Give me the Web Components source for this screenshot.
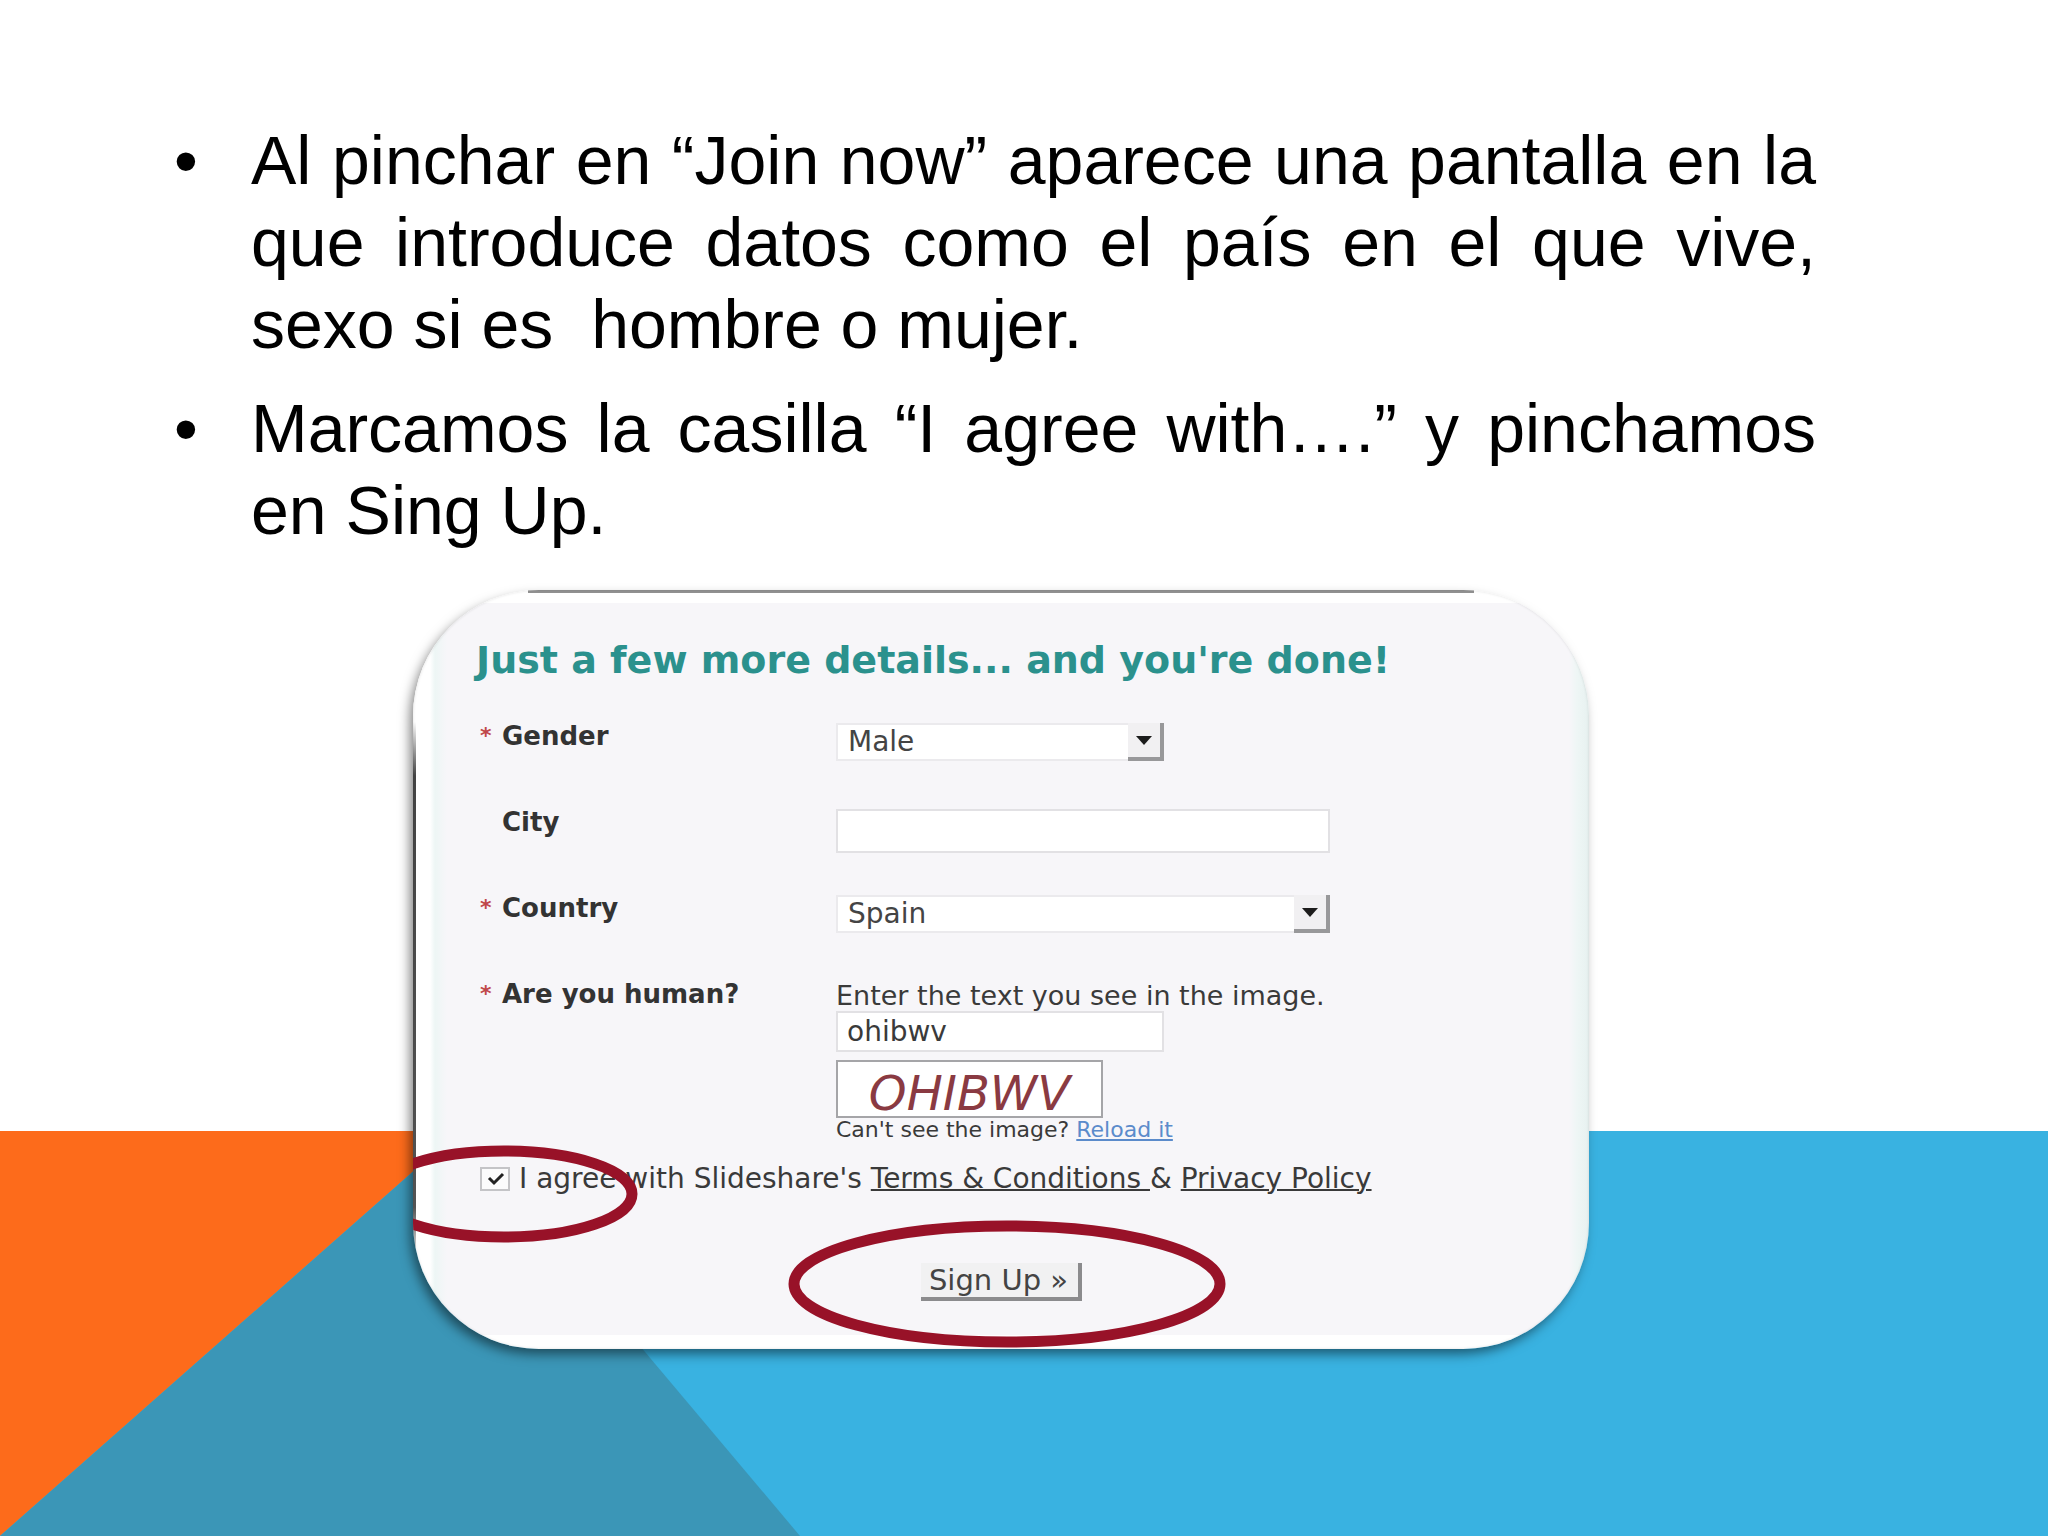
<!DOCTYPE html>
<html lang="es">
<head>
<meta charset="utf-8">
<meta name="viewport" content="width=device-width, initial-scale=1">
<title>Join now</title>
<style>
  html, body { margin: 0; background: #fff; }
  body { font-family: "Liberation Sans", Arial, sans-serif; color: #000; }
</style>
</head>
<body>
<slide-page>
  <slide-backdrop slot="backdrop"></slide-backdrop>
  <bullet-list slot="text">
    <bullet-item>Al pinchar en “Join now” aparece una pantalla en la que introduce datos como el país en el que vive, sexo si es&nbsp; hombre o mujer.</bullet-item>
    <bullet-item>Marcamos la casilla “I agree with….” y pinchamos en Sing Up.</bullet-item>
  </bullet-list>
  <signup-card slot="figure"></signup-card>
</slide-page>

<script>
const define = (name, html) => {
  const template = document.createElement('template');
  template.innerHTML = html;
  customElements.define(name, class extends HTMLElement {
    constructor() {
      super();
      this.attachShadow({ mode: 'open' }).append(template.content.cloneNode(true));
    }
  });
};

define('slide-page', `
  <style>
    :host { display: grid; min-height: 100vh; overflow: hidden; }
    .back, main { grid-area: 1 / 1; min-width: 0; }
    .back { display: flex; flex-direction: column; justify-content: flex-end; }
    main { z-index: 1; display: flex; flex-direction: column; gap: 39px; padding-top: 119px; }
    .text { display: grid; grid-template-columns: minmax(0, 174fr) minmax(0, 1642fr) minmax(0, 232fr); }
    .figure { display: grid; grid-template-columns: minmax(0, 413fr) minmax(0, 1176fr) minmax(0, 459fr); }
    ::slotted(*) { grid-column: 2; }
  </style>
  <div class="back"><slot name="backdrop"></slot></div>
  <main>
    <div class="text"><slot name="text"></slot></div>
    <div class="figure"><slot name="figure"></slot></div>
  </main>`);

define('slide-backdrop', `
  <style>
    :host { display: block; height: 405px; }
    svg { display: block; width: 100%; height: 100%; }
  </style>
  <svg viewBox="0 0 2048 405" preserveAspectRatio="none" aria-hidden="true">
    <rect width="2048" height="405" fill="#39b2e1"/>
    <path d="M0 0H459L0 405Z" fill="#fd6b1b"/>
    <path d="M0 405L459 0L800 405Z" fill="#3b96b7"/>
  </svg>`);

define('bullet-list', `
  <style>:host { display: flex; flex-direction: column; gap: 22px; }</style>
  <slot></slot>`);

define('bullet-item', `
  <style>
    :host { display: grid; grid-template-columns: 77px minmax(0, 1fr); font-size: 68px; line-height: 82px; }
    p { margin: 0; text-align: justify; }
  </style>
  <span>•</span><p><slot></slot></p>`);

define('form-row', `
  <style>
    :host { display: grid; grid-template-columns: 22px 334px minmax(0, 1fr); align-items: start; min-height: 86px; }
    .mark { font-weight: bold; font-size: 22px; line-height: 26px; color: #c0484a; }
    :host(:not([required])) .mark { visibility: hidden; }
    .field { display: flex; flex-direction: column; align-items: flex-start; }
  </style>
  <span class="mark">*</span>
  <slot name="label"></slot>
  <div class="field"><slot></slot></div>`);

define('drop-down', `
  <style>
    :host { display: grid; grid-template-columns: minmax(0, 1fr) 36px; height: 38px; box-sizing: border-box; }
    ::slotted(select) {
      grid-area: 1 / 1 / 2 / 3; appearance: none; width: 100%; height: 38px; margin: 0; padding: 0 40px 0 10px;
      border: 2px solid #ebeaed; border-radius: 0; background: #fff; color: #444;
      font: 28px/34px "DejaVu Sans", sans-serif;
    }
    .arrow {
      grid-area: 1 / 2; z-index: 1; pointer-events: none; box-sizing: border-box;
      display: flex; align-items: center; justify-content: center;
      background: #f1f0f2; border: solid #98989a; border-width: 0 4px 4px 0;
    }
    svg { width: 16px; height: 9px; }
  </style>
  <slot></slot>
  <span class="arrow"><svg viewBox="0 0 18 10" aria-hidden="true"><path d="M0 0H18L9 10Z" fill="#1c1c1c"/></svg></span>`);

define('signup-card', `
  <style>
    :host {
      display: block; position: relative; box-sizing: border-box; overflow: hidden;
      padding: 48px 66px 48px 67px; border-radius: 126px;
      font-family: "DejaVu Sans", Verdana, sans-serif; color: #3a3a3a;
      background:
        linear-gradient(#929292, #929292) 50% 0 / calc(100% - 230px) 3px no-repeat,
        linear-gradient(transparent, #444 10%, #555 90%, transparent) 0 60% / 3px calc(100% - 220px) no-repeat,
        linear-gradient(#fff, #fff) 0 0 / 100% 13px no-repeat,
        linear-gradient(#fff, #fff) 0 100% / 100% 14px no-repeat,
        linear-gradient(90deg, #fff 17px, #edf6f5 22px, #f7f6f9 34px, #f7f6f9 calc(100% - 20px), #eef6f5 calc(100% - 12px), #e7f1f0) 0 0 / 100% 100%;
      box-shadow: inset 0 0 3px rgba(0, 0, 0, .12), -4px 6px 12px -1px rgba(0, 0, 0, .5);
    }
    h1 { margin: 0 0 41px -4px; font-size: 38px; line-height: 44px; color: #2b918d; white-space: nowrap; }
    label.name { font-weight: bold; font-size: 26px; line-height: 26px; color: #333; }
    label.hint { font-size: 27px; line-height: 30px; }
    input.box {
      box-sizing: border-box; margin: 0; padding: 0 9px; border: 2px solid #e2e1e4; border-radius: 0;
      background: #fff; color: #3a3a3a; font: 28px/32px "DejaVu Sans", sans-serif; height: 44px;
    }
    #answer { height: 41px; }
    .wide { width: 494px; max-width: 100%; }
    .mid { width: 328px; max-width: 100%; }
    .captcha {
      box-sizing: border-box; width: 267px; height: 58px; margin-top: 8px; border: 2px solid #a5a5a8;
      background: #fff; text-align: center; font-size: 48px; line-height: 62px; color: #8a3a42; font-style: italic;
    }
    .reload { font-size: 22px; line-height: 24px; }
    .reload a { color: #5b8bcb; }
    .agree { display: flex; align-items: center; gap: 9px; margin-top: 22px; font-size: 28px; line-height: 30px; white-space: pre; }
    .agree a { color: inherit; text-decoration-thickness: 2px; }
    .agree input {
      appearance: none; flex: none; box-sizing: border-box; width: 30px; height: 24px; margin: 0; border: 2px solid #c4c4c7;
      background: #fbfbfc url("data:image/svg+xml,%3Csvg xmlns='http://www.w3.org/2000/svg' viewBox='0 0 26 20'%3E%3Cpath d='M7 9l5 5 9-9' fill='none' stroke='%23222' stroke-width='3'/%3E%3C/svg%3E") center / 100% 100% no-repeat;
    }
    .actions { display: flex; justify-content: center; margin-top: 69px; }
    button {
      box-sizing: border-box; height: 38px; margin: 0; padding: 0 10px 0 8px; border: solid #8b8b8d; border-width: 0 4px 4px 0;
      background: #f1f1f2; color: #444; font: 29px/34px "DejaVu Sans", sans-serif;
    }
    .rings { position: absolute; inset: 0; width: 100%; height: 100%; pointer-events: none; }
  </style>
  <h1>Just a few more details... and you're done!</h1>
  <form-row required>
    <label class="name" slot="label" for="gender">Gender</label>
    <drop-down class="mid"><select id="gender"><option>Male</option><option>Female</option></select></drop-down>
  </form-row>
  <form-row>
    <label class="name" slot="label" for="city">City</label>
    <input class="box wide" id="city" type="text">
  </form-row>
  <form-row required>
    <label class="name" slot="label" for="country">Country</label>
    <drop-down class="wide"><select id="country"><option>Spain</option></select></drop-down>
  </form-row>
  <form-row required>
    <label class="name" slot="label" for="answer">Are you human?</label>
    <label class="hint" for="answer">Enter the text you see in the image.</label>
    <input class="box mid" id="answer" type="text" value="ohibwv">
    <div class="captcha">OHIBWV</div>
    <div class="reload">Can't see the image? <a href="#reload">Reload it</a></div>
  </form-row>
  <div class="agree"><input id="agree" type="checkbox" checked><label for="agree">I agree with Slideshare's <a href="#terms">Terms &amp; Conditions </a>&amp; <a href="#privacy">Privacy Policy</a></label></div>
  <div class="actions"><button type="button">Sign Up »</button></div>
  <svg class="rings" viewBox="0 0 1176 759" aria-hidden="true">
    <g fill="none" stroke="#981228" stroke-width="11">
      <ellipse cx="91" cy="604" rx="128" ry="43"/>
      <ellipse cx="594" cy="694" rx="213" ry="58"/>
    </g>
  </svg>`);
</script>
</body>
</html>
